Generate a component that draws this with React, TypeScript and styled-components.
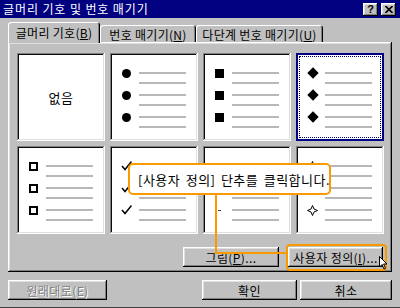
import React from "react"
import styled, { createGlobalStyle, css } from "styled-components"

const GlobalStyle = createGlobalStyle`
  body {
    margin: 0;
    background: #c0c0c0;
    font-family: "Noto Sans CJK KR", "Noto Sans", sans-serif;
  }
`

const raised = css`
  box-shadow: inset -1px -1px #000, inset 1px 1px #fff, inset -2px -2px #808080,
    inset 2px 2px #dfdfdf;
`

const Window = styled.div`
  position: relative;
  width: 400px;
  height: 308px;
  background: #c0c0c0;
  overflow: hidden;
  box-sizing: border-box;
  border-bottom: 1px solid #404040;
`

const TitleBar = styled.div`
  height: 18px;
  background: #000080;
  display: flex;
  align-items: center;
  justify-content: space-between;
  padding: 0 4px 0 3px;
`

const Title = styled.div`
  color: #fff;
  font-size: 12px;
  line-height: 18px;
  letter-spacing: 0.9px;
`

const CaptionButtons = styled.div`
  display: flex;
  gap: 3px;
`

const CaptionButton = styled.div`
  width: 15px;
  height: 13px;
  background: #c0c0c0;
  ${raised};
  display: flex;
  align-items: center;
  justify-content: center;
  font-family: "Liberation Sans", sans-serif;
  font-weight: 700;
  font-size: 11px;
  color: #000;
`

const Body = styled.div`
  padding: 4px 8px 0 8px;
`

const TabRow = styled.div`
  display: flex;
  align-items: flex-end;
  height: 20px;
  position: relative;
  z-index: 1;
`

const Tab = styled.div<{ $active?: boolean; $w: number }>`
  width: ${p => p.$w}px;
  height: ${p => (p.$active ? 21 : 17)}px;
  margin-bottom: ${p => (p.$active ? -1 : 0)}px;
  box-sizing: border-box;
  background: #c0c0c0;
  border-radius: 3px 3px 0 0;
  box-shadow: inset 1px 1px #fff, inset -1px 0 #000, inset -2px 0 #808080;
  display: flex;
  align-items: center;
  justify-content: center;
  font-size: 12px;
  letter-spacing: 0.3px;
  color: #000;
  padding-top: ${p => (p.$active ? 0 : 1)}px;
  u {
    text-decoration: underline;
  }
`

const Panel = styled.div`
  height: 230px;
  box-sizing: border-box;
  ${raised};
  padding: 11px 9px 5px 9px;
  display: flex;
  flex-direction: column;
`

const Grid = styled.div`
  display: grid;
  grid-template-columns: repeat(4, 88px);
  grid-template-rows: 88px 88px;
  column-gap: 5px;
  row-gap: 5px;
`

const Cell = styled.div<{ $selected?: boolean }>`
  background: #fff;
  box-sizing: border-box;
  box-shadow: inset -1px -1px #fff, inset 1px 1px #808080, inset -2px -2px #dfdfdf,
    inset 2px 2px #0a0a0a;
  padding: 15px 0 0 11px;
  position: relative;
  ${p =>
    p.$selected &&
    css`
      box-shadow: inset 0 0 0 2px #000080;
      outline: 1px dotted #000080;
      outline-offset: -4px;
    `}
`

const NoneCell = styled(Cell)`
  padding: 0;
  display: flex;
  align-items: center;
  justify-content: center;
  font-size: 13px;
  letter-spacing: 0.5px;
  color: #000;
`

const ItemRow = styled.div`
  display: flex;
  height: 22px;
`

const MarkerBox = styled.div`
  width: 11px;
  height: 10px;
  display: flex;
  align-items: center;
  justify-content: center;
`

const Lines = styled.div`
  margin-left: 7px;
  width: 47px;
  display: flex;
  flex-direction: column;
  gap: 8px;
  padding-top: 4px;
`

const Line = styled.div`
  height: 2px;
  background: #b8b8b8;
`

const Dot = styled.div`
  width: 9px;
  height: 9px;
  flex-shrink: 0;
  border-radius: 50%;
  background: #000;
`

const Square = styled.div`
  width: 9px;
  height: 9px;
  flex-shrink: 0;
  background: #000;
`

const Diamond = styled.div`
  width: 8px;
  height: 8px;
  flex-shrink: 0;
  background: #000;
  transform: rotate(45deg);
`

const Hollow = styled.div`
  width: 9px;
  height: 9px;
  flex-shrink: 0;
  box-sizing: border-box;
  border: 2px solid #000;
`

const Dash = styled.div`
  width: 3px;
  height: 1px;
  background: #404040;
`

const PanelButtons = styled.div`
  display: flex;
  justify-content: flex-end;
  gap: 9px;
  margin-top: 13px;
`

const Button = styled.div<{ $w: number; $disabled?: boolean }>`
  width: ${p => p.$w}px;
  height: 20px;
  box-sizing: border-box;
  background: #c0c0c0;
  ${raised};
  display: flex;
  align-items: center;
  justify-content: center;
  font-size: 12px;
  color: ${p => (p.$disabled ? "#808080" : "#000")};
  text-shadow: ${p => (p.$disabled ? "1px 1px #fff" : "none")};
  letter-spacing: 0.4px;
`

const Footer = styled.div`
  display: flex;
  margin-top: 8px;
`

const FooterRight = styled.div`
  display: flex;
  gap: 3px;
  margin-left: auto;
`

const Callout = styled.div`
  position: absolute;
  left: 128px;
  top: 163px;
  width: 203px;
  height: 32px;
  box-sizing: border-box;
  border: 2px solid #f99a00;
  border-radius: 5px;
  background: #fff;
  display: flex;
  align-items: center;
  padding-left: 8px;
  font-size: 13px;
  letter-spacing: 0.5px;
  word-spacing: 2px;
  color: #000;
  white-space: nowrap;
  z-index: 3;
`

const Connector = styled.div`
  position: absolute;
  left: 215px;
  top: 194px;
  width: 72px;
  height: 60px;
  box-sizing: border-box;
  border-left: 2px solid #f99a00;
  border-bottom: 2px solid #f99a00;
  z-index: 2;
`

const Highlight = styled.div`
  position: absolute;
  left: 286px;
  top: 244px;
  width: 101px;
  height: 27px;
  box-sizing: border-box;
  border: 2px solid #f99a00;
  border-radius: 4px;
  z-index: 2;
`

const Cursor = styled.svg`
  position: absolute;
  left: 379px;
  top: 256px;
  z-index: 4;
`

const Check = () => (
  <svg width="11" height="10" viewBox="0 0 11 10">
    <path d="M1 5 L4 8.5 L10.5 0.5" fill="none" stroke="#000" strokeWidth="1.5" />
  </svg>
)

const Star = () => (
  <svg width="11" height="11" viewBox="0 0 11 11">
    <path
      d="M5.5 0.5 Q6 5 10.5 5.5 Q6 6 5.5 10.5 Q5 6 0.5 5.5 Q5 5 5.5 0.5 Z"
      fill="#fff"
      stroke="#000"
      strokeWidth="1"
    />
  </svg>
)

const BulletCell = ({
  marker,
  selected,
}: {
  marker: React.ReactNode
  selected?: boolean
}) => (
  <Cell $selected={selected}>
    {[0, 1, 2].map(i => (
      <ItemRow key={i}>
        <MarkerBox>{marker}</MarkerBox>
        <Lines>
          <Line />
          <Line />
        </Lines>
      </ItemRow>
    ))}
  </Cell>
)

export default function App() {
  return (
    <>
      <GlobalStyle />
      <Window>
        <TitleBar>
          <Title>글머리 기호 및 번호 매기기</Title>
          <CaptionButtons>
            <CaptionButton>?</CaptionButton>
            <CaptionButton>
              <svg width="8" height="7" viewBox="0 0 8 7">
                <path d="M0.5 0 L7.5 7 M7.5 0 L0.5 7" stroke="#000" strokeWidth="1.6" />
              </svg>
            </CaptionButton>
          </CaptionButtons>
        </TitleBar>
        <Body>
          <TabRow>
            <Tab $active $w={92}>
              글머리 기호(<u>B</u>)
            </Tab>
            <Tab $w={96}>
              번호 매기기(<u>N</u>)
            </Tab>
            <Tab $w={127}>
              다단계 번호 매기기(<u>U</u>)
            </Tab>
          </TabRow>
          <Panel>
            <Grid>
              <NoneCell>없음</NoneCell>
              <BulletCell marker={<Dot />} />
              <BulletCell marker={<Square />} />
              <BulletCell marker={<Diamond />} selected />
              <BulletCell marker={<Hollow />} />
              <BulletCell marker={<Check />} />
              <BulletCell marker={<Dash />} />
              <BulletCell marker={<Star />} />
            </Grid>
            <PanelButtons>
              <Button $w={96}>
                그림(<u>P</u>)...
              </Button>
              <Button $w={95}>
                사용자 정의(<u>I</u>)...
              </Button>
            </PanelButtons>
          </Panel>
          <Footer>
            <Button $w={99} $disabled>
              원래대로(E)
            </Button>
            <FooterRight>
              <Button $w={95}>확인</Button>
              <Button $w={92}>취소</Button>
            </FooterRight>
          </Footer>
        </Body>
        <Callout>[사용자 정의] 단추를 클릭합니다.</Callout>
        <Connector />
        <Highlight />
        <Cursor width="9" height="14" viewBox="0 0 9 14">
          <path d="M0.5 0.5 L0.5 11 L3 8.5 L5 13 L6.5 12.3 L4.6 8 L8 8 Z" fill="#fff" stroke="#000" strokeWidth="1" />
        </Cursor>
      </Window>
    </>
  )
}
